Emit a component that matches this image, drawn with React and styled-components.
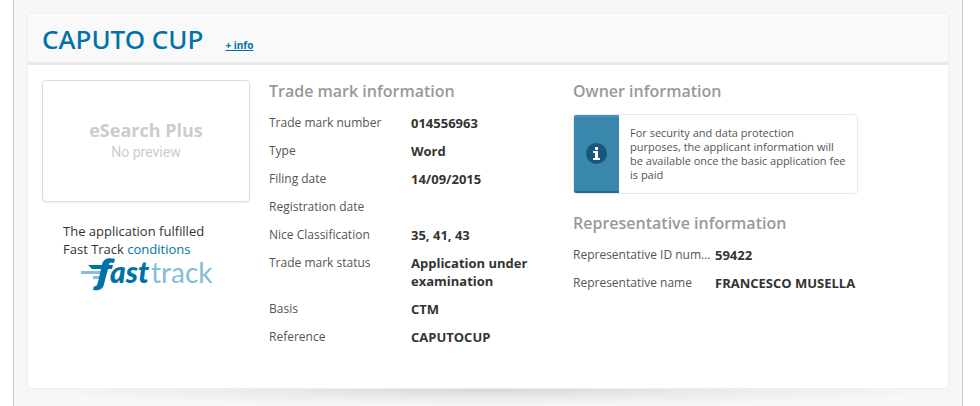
import React from "react";
import styled, { createGlobalStyle } from "styled-components";

const Global = createGlobalStyle`
  *, *::before, *::after { box-sizing: border-box; }
  body {
    margin: 0;
    background: #fff;
    color: #333;
    font: 13px/18px "Open Sans", "Noto Sans", sans-serif;
  }
  h1, h2, p, dl, dd { margin: 0; }
`;

const Page = styled.main`
  min-height: 100vh;
  margin: 0 17px 0 13px;
  padding: 13px;
  border: solid #ccc;
  border-width: 0 1px;
  background: #f7f7f7;
`;

const Card = styled.article`
  min-height: 376px;
  border: 1px solid #eee;
  border-radius: 4px;
  background: #fff;
`;

const CardShadow = styled.div`
  height: 17px;
  background: radial-gradient(ellipse 50% 100% at 50% 0, #d6d6d6, #e9e9e9 45%, #f7f7f7);
`;

const Header = styled.header`
  display: flex;
  align-items: baseline;
  gap: 22px;
  height: 51px;
  padding: 6px 14px 0;
  border-top: 2px solid #fff;
  border-bottom: 3px solid #e8e8e8;
  border-radius: 4px 4px 0 0;
  background: #f9f9f9;
`;

const Title = styled.h1`
  color: #0072a9;
  font: 500 26px/34px "Noto Sans", "Open Sans", sans-serif;
`;

const Link = styled.a`
  color: #0072a9;
  text-decoration: none;
`;

const InfoLink = styled(Link)`
  font-size: 10px;
  font-weight: 700;
  line-height: 14px;
  text-decoration: underline;
`;

const Body = styled.div`
  display: grid;
  grid-template-columns: 208px minmax(0, 285px) minmax(0, 285px);
  gap: 19px;
  padding: 15px 14px;
`;

const Preview = styled.div`
  display: flex;
  flex-direction: column;
  align-items: center;
  justify-content: center;
  height: 122px;
  padding-bottom: 2px;
  border: 1px solid #ddd;
  border-radius: 4px;
  box-shadow: 0 1px 2px #eee;
  color: #ccc;
`;

const PreviewName = styled.strong`
  font: 700 18px/24px "Open Sans", sans-serif;
`;

const PreviewNote = styled.span`
  font: 14px/20px Roboto, sans-serif;
`;

const FastTrack = styled.div`
  padding: 20px 21px 0;
`;

const Logo = styled.svg`
  display: block;
  width: 134px;
  height: 34px;
  margin-left: 17px;
`;

const Section = styled.section`
  & + & { margin-top: 18px; }
`;

const SectionTitle = styled.h2`
  margin-bottom: 12px;
  color: #999;
  font-size: 16px;
  font-weight: 600;
  line-height: 22px;
`;

const Details = styled.dl`
  display: flex;
  flex-direction: column;
  gap: 10px;
`;

const Row = styled.div`
  display: grid;
  grid-template-columns: 138px minmax(0, 1fr);
  column-gap: 4px;
`;

const Term = styled.dt`
  overflow: hidden;
  color: #555;
  font-size: 12px;
  text-overflow: ellipsis;
  white-space: nowrap;
`;

const Value = styled.dd`
  font-weight: 700;
`;

const Notice = styled.div`
  display: grid;
  grid-template-columns: 45px minmax(0, 1fr);
  min-height: 80px;
  border: 1px solid #eaeaea;
  border-radius: 3px;
`;

const NoticeIcon = styled.div`
  display: grid;
  place-items: center;
  padding-bottom: 2px;
  border-top: 2px solid #4593bb;
  border-bottom: 2px solid #266a92;
  border-radius: 2px 0 0 2px;
  background: #3a87ad;
`;

const NoticeText = styled.p`
  align-self: center;
  padding: 0 10px 0 11px;
  color: #555;
  font-size: 11px;
  line-height: 14px;
`;

const trademark = [
  ["Trade mark number", "014556963"],
  ["Type", "Word"],
  ["Filing date", "14/09/2015"],
  ["Registration date", ""],
  ["Nice Classification", "35, 41, 43"],
  ["Trade mark status", "Application under examination"],
  ["Basis", "CTM"],
  ["Reference", "CAPUTOCUP"],
];

const representative = [
  ["Representative ID number", "59422"],
  ["Representative name", "FRANCESCO MUSELLA"],
];

function DetailList({ items }) {
  return (
    <Details>
      {items.map(([term, value]) => (
        <Row key={term}>
          <Term>{term}</Term>
          <Value>{value}</Value>
        </Row>
      ))}
    </Details>
  );
}

function FastTrackLogo() {
  return (
    <Logo viewBox="0 0 134 34" role="img" aria-label="fast track">
      <path d="M1 13h22l-1 3H1zM13 18h9l-1 3h-8z" fill="#86bdd8" />
      <path
        d="M35 1c-8-2-12 0-13 6H8l4 4h9l-3 13c-1 4-2 5-4 4l-1 4c7 1 10-1 11-6l4-15h4l1-4h-4c0-3 2-3 5-2z"
        fill="#0072a9"
      />
      <text x="30" y="25" fill="#0072a9" fontFamily="Lato" fontSize="30" fontWeight="900" fontStyle="italic">ast</text>
      <text x="71" y="25" fill="#86bdd8" fontFamily="Lato" fontSize="28">track</text>
    </Logo>
  );
}

function InfoIcon() {
  return (
    <svg width="21" height="21" viewBox="0 0 21 21" aria-hidden="true">
      <circle cx="10.5" cy="10.5" r="10.5" fill="#1b557a" />
      <path d="M7 8h5v7h2v2H7v-2h2v-5H7zM9 4h3v3H9z" fill="#fff" />
    </svg>
  );
}

export default function App() {
  return (
    <>
      <Global />
      <Page>
        <Card>
          <Header>
            <Title>CAPUTO CUP</Title>
            <InfoLink href="#info">+ info</InfoLink>
          </Header>
          <Body>
            <div>
              <Preview>
                <PreviewName>eSearch Plus</PreviewName>
                <PreviewNote>No preview</PreviewNote>
              </Preview>
              <FastTrack>
                <p>
                  The application fulfilled Fast Track <Link href="#conditions">conditions</Link>
                </p>
                <FastTrackLogo />
              </FastTrack>
            </div>
            <Section>
              <SectionTitle>Trade mark information</SectionTitle>
              <DetailList items={trademark} />
            </Section>
            <div>
              <Section>
                <SectionTitle>Owner information</SectionTitle>
                <Notice>
                  <NoticeIcon>
                    <InfoIcon />
                  </NoticeIcon>
                  <NoticeText>
                    For security and data protection purposes, the applicant information will be
                    available once the basic application fee is paid
                  </NoticeText>
                </Notice>
              </Section>
              <Section>
                <SectionTitle>Representative information</SectionTitle>
                <DetailList items={representative} />
              </Section>
            </div>
          </Body>
        </Card>
        <CardShadow />
      </Page>
    </>
  );
}
